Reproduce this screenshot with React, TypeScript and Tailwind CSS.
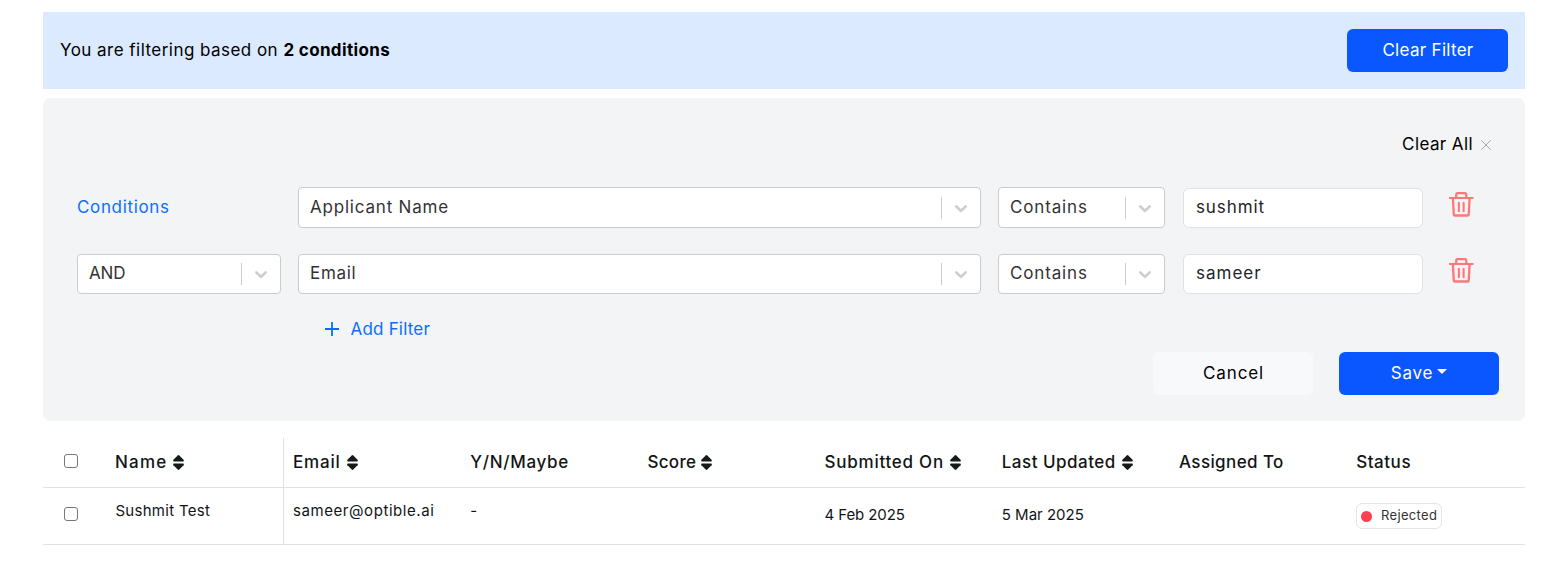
function Chevron() {
  return (
    <svg width="20" height="20" viewBox="0 0 20 20" className="fill-[#cccccc] stroke-[#cccccc] stroke-[0.3]">
      <path d="M4.516 7.548c0.436-0.446 1.043-0.481 1.576 0l3.908 3.747 3.908-3.747c0.533-0.481 1.141-0.446 1.574 0 0.436 0.445 0.408 1.197 0 1.615-0.406 0.418-4.695 4.502-4.695 4.502-0.217 0.223-0.502 0.335-0.787 0.335s-0.57-0.112-0.789-0.335c0 0-4.287-4.084-4.695-4.502s-0.436-1.17 0-1.615z" />
    </svg>
  );
}

function Trash() {
  return (
    <svg width="25" height="25" viewBox="0 0 25 25" fill="none" stroke="#ff7777" strokeWidth="2.3">
      <path d="M0 6H24.5" strokeWidth="2" />
      <path d="M7.2 6V2.7Q7.2 1.1 8.8 1.1H15.7Q17.3 1.1 17.3 2.7V6" />
      <path d="M3.9 6.5L4.8 22.6Q4.9 23.5 5.8 23.5H18.7Q19.6 23.5 19.7 22.6L20.6 6.5" />
      <path d="M9.9 10.8V19.2M14.6 10.8V19.2" strokeLinecap="round" strokeWidth="2.1" />
    </svg>
  );
}

function SortIcon() {
  return (
    <svg width="11" height="15" viewBox="0 0 11 15" className="fill-[#161a1a]">
      <path d="M4.7 0.4Q5.5 -0.3 6.3 0.4L10.6 4.8Q11.3 6.3 10 6.5H1Q-0.3 6.3 0.4 4.8Z" />
      <path d="M4.7 14.6Q5.5 15.3 6.3 14.6L10.6 10.2Q11.3 8.7 10 8.5H1Q-0.3 8.7 0.4 10.2Z" />
    </svg>
  );
}

function Select({ label, className, tracking }: { label: string; className: string; tracking: string }) {
  return (
    <div className={`flex items-center rounded-[4px] border border-[#cccccc] bg-white pl-[11px] text-[#333333] ${className}`}>
      <span className={`flex-1 pb-[2px] ${tracking}`}>{label}</span>
      <span className="h-[22px] w-px bg-[#cccccc]" />
      <span className="flex w-[38px] justify-center">
        <Chevron />
      </span>
    </div>
  );
}

function ValueInput({ value, tracking }: { value: string; tracking: string }) {
  return (
    <div className="ml-[18px] flex h-10 w-[240px] items-center rounded-[6px] border border-[#dee2e6] bg-white pb-[2px] pl-3 text-[#212529]">
      <span className={tracking}>{value}</span>
    </div>
  );
}

function Checkbox() {
  return <span className="block size-[14px] rounded-[3px] border border-[#767676] bg-white" />;
}

const columns = [
  { title: 'Name', tracking: 'tracking-[1.2px]', gap: 'gap-1.5', sortable: true },
  { title: 'Email', tracking: 'tracking-[0.8px]', gap: 'gap-1.5', sortable: true },
  { title: 'Y/N/Maybe', tracking: 'tracking-[0.7px]', gap: 'gap-1.5', sortable: false },
  { title: 'Score', tracking: 'tracking-[0.35px]', gap: 'gap-[5px]', sortable: true },
  { title: 'Submitted On', tracking: 'tracking-[0.75px]', gap: 'gap-1.5', sortable: true },
  { title: 'Last Updated', tracking: 'tracking-[0.5px]', gap: 'gap-1.5', sortable: true },
  { title: 'Assigned To', tracking: 'tracking-[0.4px]', gap: 'gap-1.5', sortable: false },
  { title: 'Status', tracking: 'tracking-[0.55px]', gap: 'gap-1.5', sortable: false },
];

const tableGrid = 'grid grid-cols-[63px_178px_repeat(7,177.2px)] border-b border-[#dee2e6]';

export default function App() {
  return (
    <div className="h-[579px] overflow-hidden bg-white px-[43px] pt-3 font-['Inter',sans-serif] text-[17px] leading-6 text-black">
      <div className="w-[1482px]">
        <div className="flex h-[77px] items-center justify-between bg-[#dbeafe] px-[17px]">
          <p className="-mt-px">
            <span className="tracking-[0.46px]">You are filtering based on </span>
            <b className="font-bold tracking-[0.35px]">2 conditions</b>
          </p>
          <button className="h-[43px] w-[161px] rounded-[6px] bg-[#0b57ff] pb-px pl-px tracking-[0.3px] text-white">Clear Filter</button>
        </div>

        <div className="mt-[9px] h-[323px] rounded-[8px] bg-[#f2f4f6] pt-[34px]">
          <div className="flex items-center justify-end gap-2 pr-[34px]">
            <span className="tracking-[0.4px]">Clear All</span>
            <svg width="10" height="10" viewBox="0 0 10 10" stroke="#a9abad" strokeWidth="1" className="mt-px">
              <path d="M0.3 0.3L9.7 9.7M9.7 0.3L0.3 9.7" />
            </svg>
          </div>

          <div className="mt-[31px] flex h-[41px] items-end pl-[34px]">
            <div className="w-[221px] self-center pb-px tracking-[0.65px] text-[#0d6efd]">Conditions</div>
            <Select label="Applicant Name" className="h-[41px] w-[683px]" tracking="tracking-[0.8px]" />
            <Select label="Contains" className="ml-[17px] h-[41px] w-[167px]" tracking="tracking-[0.85px]" />
            <ValueInput value="sushmit" tracking="tracking-[0.9px]" />
            <span className="ml-[26px] self-start pt-[5px]">
              <Trash />
            </span>
          </div>

          <div className="mt-[26px] flex h-10 items-end pl-[34px]">
            <Select label="AND" className="mr-[17px] h-10 w-[204px] pb-px" tracking="tracking-[-0.2px]" />
            <Select label="Email" className="h-10 w-[683px] pb-px" tracking="tracking-[0.7px]" />
            <Select label="Contains" className="ml-[17px] h-10 w-[167px] pb-px" tracking="tracking-[0.85px]" />
            <ValueInput value="sameer" tracking="tracking-[1px]" />
            <span className="ml-[26px] self-start pt-1">
              <Trash />
            </span>
          </div>

          <div className="mt-[23px] flex items-center gap-3 pl-[281.5px] text-[#0d6efd]">
            <svg width="14" height="14" viewBox="0 0 14 14" stroke="currentColor" strokeWidth="1.8">
              <path d="M7 0V14M0 7H14" />
            </svg>
            <span className="tracking-[0.2px]">Add Filter</span>
          </div>

          <div className="mt-[11px] flex justify-end gap-[26px] pr-[26px]">
            <button className="h-[43px] w-[160px] rounded-[6px] bg-[#f8f9fb] pb-px pl-px tracking-[0.9px]">Cancel</button>
            <button className="flex h-[43px] w-[160px] items-center justify-center gap-1 rounded-[6px] bg-[#0b57ff] pb-px text-white">
              <span className="tracking-[0.8px]">Save</span>
              <span className="-mt-[3px] border-x-[5px] border-t-[5px] border-x-transparent border-t-white" />
            </button>
          </div>
        </div>

        <div className="mt-[17px] text-[#111516]">
          <div className={`h-[50px] ${tableGrid}`}>
            <div className="pt-4 pl-[21px]">
              <Checkbox />
            </div>
            {columns.map((c, i) => (
              <div
                key={c.title}
                className={`flex items-center pb-px pl-[9px] font-medium whitespace-nowrap ${c.gap} ${i === 0 ? 'border-r border-[#dee2e6]' : ''}`}
              >
                <span className={c.tracking}>{c.title}</span>
                {c.sortable && <SortIcon />}
              </div>
            ))}
          </div>
          <div className={`h-[57px] text-[15px] leading-6 ${tableGrid}`}>
            <div className="pt-[19px] pl-[21px]">
              <Checkbox />
            </div>
            <div className="border-r border-[#dee2e6] pt-[11px] pl-[9.4px] tracking-[0.3px]">Sushmit Test</div>
            <div className="pt-[11px] pl-[9px] tracking-[0.57px]">sameer@optible.ai</div>
            <div className="pt-[11px] pl-[9px]">-</div>
            <div />
            <div className="pt-[15px] pl-[9px] tracking-[-0.1px]">4 Feb 2025</div>
            <div className="pt-[15px] pl-[9px]">5 Mar 2025</div>
            <div />
            <div className="pt-[15px] pl-[8.8px]">
              <span className="flex h-[26px] w-[86px] items-center gap-[9px] rounded-[6px] border border-[#e3e5e8] pl-1 text-[13px] text-[#333333]">
                <i className="size-[11px] rounded-full bg-[#fd3f50]" />
                <span className="-mt-0.5 tracking-[0.35px]">Rejected</span>
              </span>
            </div>
          </div>
        </div>
      </div>
    </div>
  );
}
